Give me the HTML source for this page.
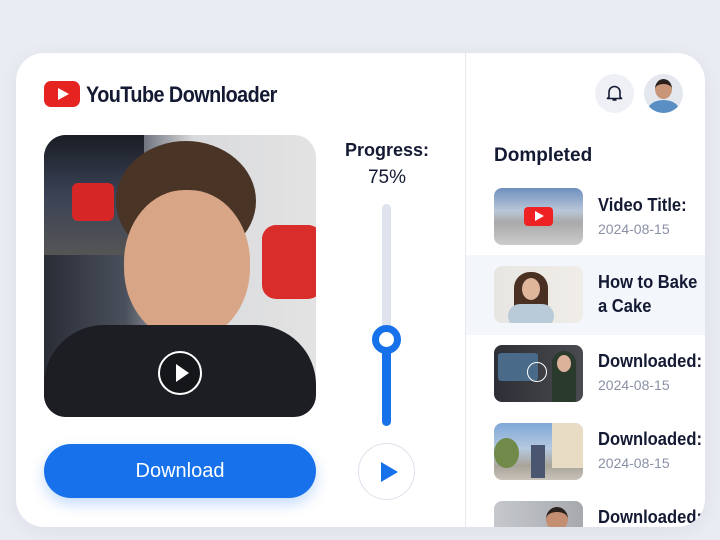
<!DOCTYPE html>
<html><head><style>
*{margin:0;padding:0;box-sizing:border-box}
body{width:720px;height:540px;background:#e9ecf2;font-family:"Liberation Sans",sans-serif;position:relative;overflow:hidden}
.card{position:absolute;left:16px;top:53px;width:689px;height:474px;background:#fff;border-radius:28px;overflow:hidden;box-shadow:0 4px 20px rgba(30,40,80,.06)}
.div{position:absolute;left:449px;top:0;width:1px;height:474px;background:#e6e9ef}
.t{position:absolute;color:#141a33;font-weight:bold}
.thumb{position:absolute;left:478px;width:89px;height:57px;border-radius:8px;overflow:hidden}
.ti{position:absolute;left:582px;font-size:18px;color:#141a33;font-weight:bold;white-space:nowrap;transform:scaleX(.92);transform-origin:left}
.dt{position:absolute;left:582px;font-size:14px;color:#8a91a6}
</style></head><body>
<div class="card">
<div class="div"></div>
<div style="position:absolute;left:28px;top:28px;width:36px;height:26px;background:#e52321;border-radius:7px"></div>
<div style="position:absolute;left:42px;top:35px;width:0;height:0;border-left:11px solid #fff;border-top:6px solid transparent;border-bottom:6px solid transparent"></div>
<div class="t" style="left:70px;top:29px;font-size:22px;letter-spacing:-0.6px;transform:scaleX(.9);transform-origin:left;white-space:nowrap">YouTube Downloader</div>
<div style="position:absolute;left:28px;top:82px;width:272px;height:282px;border-radius:22px;overflow:hidden;background:linear-gradient(90deg,#2a2d36 0,#4a505c 30%,#d9dadd 55%,#e3e3e3 100%)">
 <div style="position:absolute;left:0;top:0;width:100px;height:120px;background:linear-gradient(180deg,#1a1d25,#3a4255 50%,#555 100%)"></div>
 <div style="position:absolute;left:28px;top:48px;width:42px;height:38px;background:#d62626;border-radius:6px"></div>
 <div style="position:absolute;left:218px;top:90px;width:60px;height:74px;background:#d92d2b;border-radius:14px"></div>
 <div style="position:absolute;left:72px;top:6px;width:140px;height:120px;border-radius:50%;background:#4a3426"></div>
 <div style="position:absolute;left:80px;top:55px;width:126px;height:150px;border-radius:48%;background:#d8a587"></div>
 <div style="position:absolute;left:0;top:190px;width:272px;height:100px;border-radius:60px 60px 0 0;background:#1d1e23"></div>
 <div style="position:absolute;left:114px;top:216px;width:44px;height:44px;border-radius:50%;border:2px solid #fff;background:rgba(0,0,0,.25)"></div>
 <div style="position:absolute;left:132px;top:229px;border-left:13px solid #fff;border-top:9px solid transparent;border-bottom:9px solid transparent"></div>
</div>
<div style="position:absolute;left:28px;top:391px;width:272px;height:54px;border-radius:27px;background:#1671ea;color:#fff;font-size:20px;text-align:center;line-height:54px;box-shadow:0 6px 14px rgba(22,113,234,.25)">Download</div>
<div class="t" style="left:322px;top:87px;width:98px;text-align:center;font-size:18px">Progress:</div>
<div style="position:absolute;left:322px;top:114px;width:98px;text-align:center;font-size:19px;color:#141a33">75%</div>
<div style="position:absolute;left:366px;top:151px;width:9px;height:222px;border-radius:5px;background:#dfe3ee"></div>
<div style="position:absolute;left:366px;top:285px;width:9px;height:88px;border-radius:5px;background:#1671ea"></div>
<div style="position:absolute;left:356px;top:272px;width:29px;height:29px;border-radius:50%;border:7px solid #1671ea;background:#fff"></div>
<div style="position:absolute;left:342px;top:390px;width:57px;height:57px;border-radius:50%;border:1px solid #dde1ea"></div>
<div style="position:absolute;left:365px;top:409px;border-left:17px solid #1671ea;border-top:10px solid transparent;border-bottom:10px solid transparent"></div>
<div style="position:absolute;left:579px;top:21px;width:39px;height:39px;border-radius:50%;background:#eef0f5"></div>
<svg style="position:absolute;left:589px;top:31px" width="19" height="19" viewBox="0 0 19 19"><path d="M4 13V8a5.5 5.5 0 0 1 11 0v5l1.5 1.5h-14z M7.5 16h4" fill="none" stroke="#141a33" stroke-width="1.6" stroke-linejoin="round"/></svg>
<div style="position:absolute;left:628px;top:21px;width:39px;height:39px;border-radius:50%;background:#e4e8ee;overflow:hidden">
 <div style="position:absolute;left:11px;top:5px;width:17px;height:20px;border-radius:50%;background:#c99579;border-top:5px solid #2b211c"></div>
 <div style="position:absolute;left:4px;top:26px;width:31px;height:20px;border-radius:50%;background:#5a8fc4"></div>
</div>
<div class="t" style="left:478px;top:92px;font-size:19px">Dompleted</div>
<div style="position:absolute;left:450px;top:202px;width:240px;height:80px;background:#f3f6fb"></div>
<div class="thumb" style="top:135px;background:linear-gradient(180deg,#6f8fbf 0,#b9c6d8 40%,#a9a9a9 60%,#ccc 100%)"><div style="position:absolute;left:30px;top:19px;width:29px;height:19px;background:#e22;border-radius:4px"></div><div style="position:absolute;left:41px;top:23px;border-left:9px solid #fff;border-top:5px solid transparent;border-bottom:5px solid transparent"></div></div>
<div class="ti" style="top:142px">Video Title:</div><div class="dt" style="top:168px">2024-08-15</div>
<div class="thumb" style="top:213px;background:linear-gradient(90deg,#e8e6e2,#f0ede8)"><div style="position:absolute;left:20px;top:6px;width:34px;height:50px;border-radius:16px 16px 4px 4px;background:#4a3023"></div><div style="position:absolute;left:28px;top:12px;width:18px;height:22px;border-radius:50%;background:#e0b69b"></div><div style="position:absolute;left:14px;top:38px;width:46px;height:24px;border-radius:12px;background:#b9cad8"></div></div>
<div class="ti" style="top:219px">How to Bake</div><div class="ti" style="top:243px">a Cake</div>
<div class="thumb" style="top:292px;background:linear-gradient(90deg,#2c2f35,#4a4b50)"><div style="position:absolute;left:4px;top:8px;width:40px;height:28px;background:#4a6a8a;border-radius:3px"></div><div style="position:absolute;left:58px;top:6px;width:24px;height:51px;border-radius:12px 12px 2px 2px;background:#2a3a2c"></div><div style="position:absolute;left:63px;top:10px;width:14px;height:17px;border-radius:50%;background:#dcb29a"></div><div style="position:absolute;left:33px;top:17px;width:20px;height:20px;border-radius:50%;border:1.5px solid #fff"></div></div>
<div class="ti" style="top:298px">Downloaded:</div><div class="dt" style="top:324px">2024-08-15</div>
<div class="thumb" style="top:370px;background:linear-gradient(180deg,#7fa8d8 0,#b6c9df 45%,#a9a49a 75%,#c8c2b8 100%)"><div style="position:absolute;left:58px;top:0;width:31px;height:45px;background:#e8dcc4"></div><div style="position:absolute;left:0;top:15px;width:25px;height:30px;background:#708a4a;border-radius:50%"></div><div style="position:absolute;left:37px;top:22px;width:14px;height:33px;background:#4a5570"></div></div>
<div class="ti" style="top:376px">Downloaded:</div><div class="dt" style="top:402px">2024-08-15</div>
<div class="thumb" style="top:448px;background:linear-gradient(90deg,#c5c8cc,#a6a9ad)"><div style="position:absolute;left:52px;top:6px;width:22px;height:24px;border-radius:50%;background:#c48e72;border-top:5px solid #2b211c"></div></div>
<div class="ti" style="top:454px">Downloaded:</div>
</div>
</body></html>
